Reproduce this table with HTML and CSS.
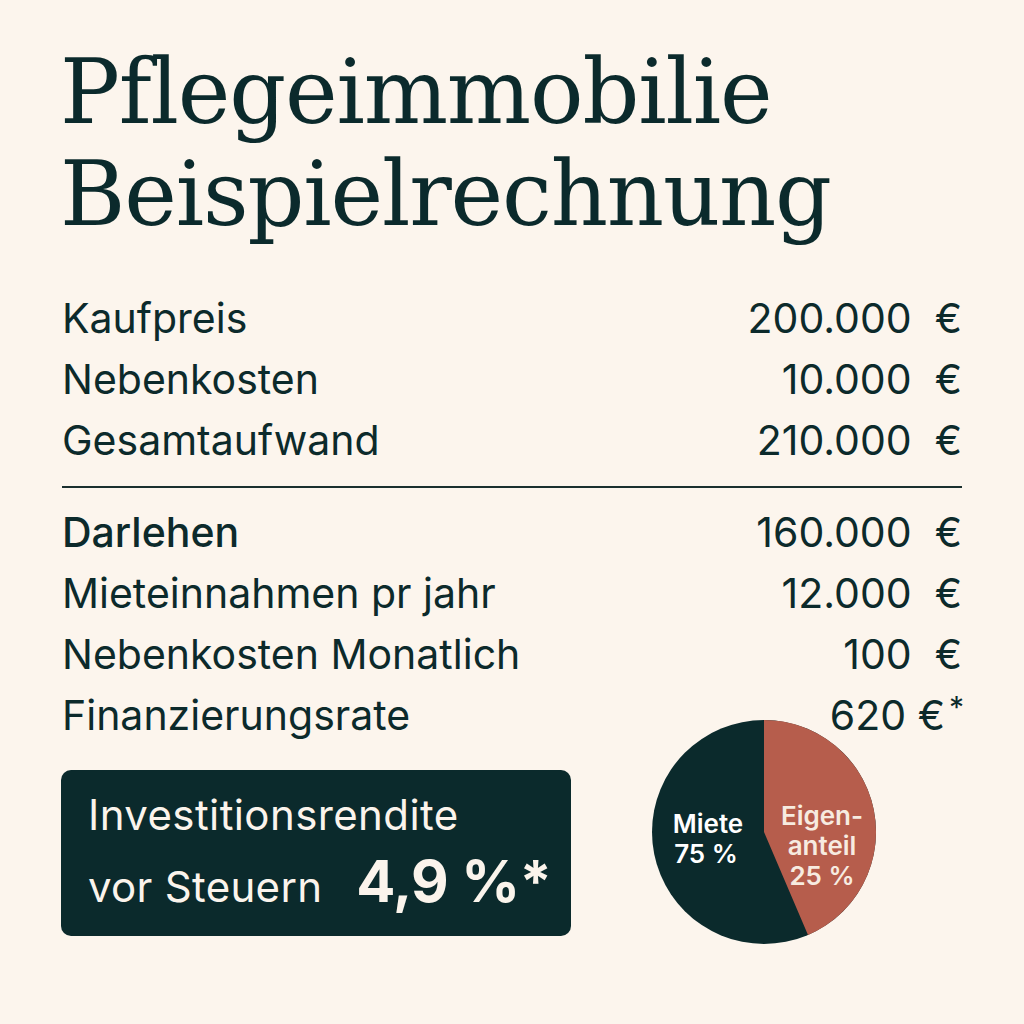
FILE: index.html
```html
<!DOCTYPE html>
<html lang="de">
<head>
<meta charset="utf-8">
<title>Pflegeimmobilie Beispielrechnung</title>
<link rel="stylesheet" href="styles.css">
</head>
<body>
<main class="page">
  <h1 class="title">Pflegeimmobilie<br>Beispielrechnung</h1>
  <section class="table">
    <div class="row"><span>Kaufpreis</span><span>200.000 &nbsp;€</span></div>
    <div class="row"><span>Nebenkosten</span><span>10.000 &nbsp;€</span></div>
    <div class="row"><span>Gesamtaufwand</span><span>210.000 &nbsp;€</span></div>
    <hr class="rule">
    <div class="row"><span class="strong">Darlehen</span><span>160.000 &nbsp;€</span></div>
    <div class="row"><span>Mieteinnahmen pr jahr</span><span>12.000 &nbsp;€</span></div>
    <div class="row"><span>Nebenkosten Monatlich</span><span>100 &nbsp;€</span></div>
    <div class="row"><span>Finanzierungsrate</span><span class="rate">620 €<span class="star">*</span></span></div>
  </section>
  <section class="bottom">
    <div class="box">
      <div class="box-line">Investitionsrendite</div>
      <div class="box-row"><span>vor Steuern</span><span class="big">4,9 %*</span></div>
    </div>
    <svg class="pie" width="226" height="226" viewBox="0 0 226 226">
      <circle cx="113" cy="113" r="112" fill="#0b2a2c"/>
      <path d="M113,113 L113,1 A112,112 0 0 1 157,216 Z" fill="#b65d4c"/>
      <g class="pie-label">
        <text x="57" y="114">Miete</text>
        <text x="55" y="144">75 %</text>
        <text class="light" x="171" y="106">Eigen-</text>
        <text class="light" x="171" y="136">anteil</text>
        <text class="light" x="171" y="166">25 %</text>
      </g>
    </svg>
  </section>
</main>
</body>
</html>
```
FILE: styles.css
```css
html, body {
  margin: 0;
  padding: 0;
  background: #fcf5ed;
}
.page {
  width: 1024px;
  height: 1024px;
  box-sizing: border-box;
  padding: 41px 62px 0 62px;
  color: #0c2a2b;
  font-family: Inter, "Noto Sans", sans-serif;
}
.title {
  margin: 0 0 0 -2px;
  font-family: "DejaVu Serif", "Liberation Serif", serif;
  font-weight: 400;
  font-size: 89px;
  line-height: 102px;
  letter-spacing: -1.2px;
  color: #0b2a2c;
}
.table {
  margin-top: 43px;
}
.row {
  display: flex;
  justify-content: space-between;
  font-size: 41px;
  line-height: 61px;
  font-weight: 400;
}
.strong {
  font-weight: 500;
}
.rate {
  margin-right: -2px;
}
.star {
  font-size: 30px;
  line-height: 0;
  vertical-align: 12px;
  margin-left: 4px;
}
.rule {
  margin: 15px 0 14px 0;
  border: 0;
  height: 2px;
  background: #1a2f2e;
}
.bottom {
  display: flex;
  align-items: flex-start;
  margin-top: 24px;
}
.box {
  flex: none;
  width: 510px;
  height: 166px;
  box-sizing: border-box;
  margin-left: -1px;
  padding: 21px 27px 0 27px;
  background: #0b2a2c;
  border-radius: 10px;
  color: #fbf4ec;
  white-space: nowrap;
}
.box-line {
  font-size: 42px;
  line-height: 48px;
  letter-spacing: 0.4px;
}
.box-row {
  display: flex;
  align-items: baseline;
  margin-top: 10px;
  font-size: 42px;
  line-height: 64px;
  letter-spacing: 0.3px;
}
.big {
  margin-left: 34px;
  font-size: 58px;
  font-weight: 700;
  letter-spacing: -0.6px;
}
.pie {
  flex: none;
  display: block;
  margin-left: 80px;
  margin-top: -51px;
}
.pie-label text {
  font-family: Inter, "Noto Sans", sans-serif;
  font-size: 26px;
  font-weight: 600;
  fill: #ffffff;
  text-anchor: middle;
}
.pie-label text.light {
  fill: #f7ebe0;
}
```
